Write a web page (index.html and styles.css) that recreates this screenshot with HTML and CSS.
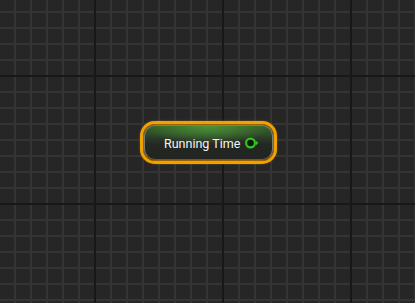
FILE: index.html
```html
<!DOCTYPE html>
<html lang="en">
<head>
    <meta charset="UTF-8">
    <title>Blueprint Graph</title>
    <link rel="stylesheet" href="styles.css">
</head>
<body>
    <div class="graph">
        <div class="node">
            <div class="node-body">
                <span class="node-title">Running Time</span>
                <svg class="pin" width="16" height="12" viewBox="0 0 16 12">
                    <circle cx="6.5" cy="6" r="4.4" fill="#121610" stroke="#2fc51a" stroke-width="2.2"/>
                    <polygon points="11.8,3.6 14.3,6 11.8,8.4" fill="#2fc51a"/>
                </svg>
            </div>
        </div>
    </div>
</body>
</html>
```

FILE: styles.css
```css
:root {
    --canvas: #262626;
    --grid-minor: #343434;
    --grid-major: #181818;
    --selected: #f2a200;
    --pin: #2fc51a;
}

* {
    margin: 0;
    padding: 0;
    box-sizing: border-box;
}

body {
    width: 415px;
    height: 303px;
    overflow: hidden;
    font-family: Roboto, "Noto Sans", sans-serif;
}

.graph {
    position: relative;
    width: 100%;
    height: 100%;
    background-color: var(--canvas);
    background-image:
        linear-gradient(to right, var(--grid-major) 2px, transparent 2px),
        linear-gradient(to bottom, var(--grid-major) 2px, transparent 2px),
        linear-gradient(to right, var(--grid-minor) 2px, transparent 2px),
        linear-gradient(to bottom, var(--grid-minor) 2px, transparent 2px);
    background-size: 128px 128px, 128px 128px, 16px 16px, 16px 16px;
    background-position: 94px 75px, 94px 75px, 14px 11px, 14px 11px;
}

/* node sits on the free canvas */
.node {
    position: absolute;
    left: 140px;
    top: 121px;
    width: 137px;
    height: 43px;
    border: 3px solid var(--selected);
    border-radius: 15px;
    padding: 1px;
    background: #17150f;
    box-shadow: 0 0 2px rgba(255, 170, 0, 0.45), inset 0 0 0 1px #9a6400;
}

.node-body {
    height: 100%;
    display: flex;
    align-items: center;
    padding-left: 19px;
    gap: 4px;
    border: 1px solid #7b7f72;
    border-bottom-color: #6b5a3a;
    border-radius: 11px;
    background:
        radial-gradient(ellipse 50% 55% at 50% 0%, rgba(95, 190, 65, 0.55), rgba(60, 140, 40, 0) 100%),
        linear-gradient(to bottom, #36602b 0%, #2f4c28 25%, #293427 42%, #242823 55%, #212420 100%);
}

.node-title {
    font-size: 12.5px;
    color: #f4f4f4;
    padding-top: 1px;
}

.pin {
    display: block;
}
```
